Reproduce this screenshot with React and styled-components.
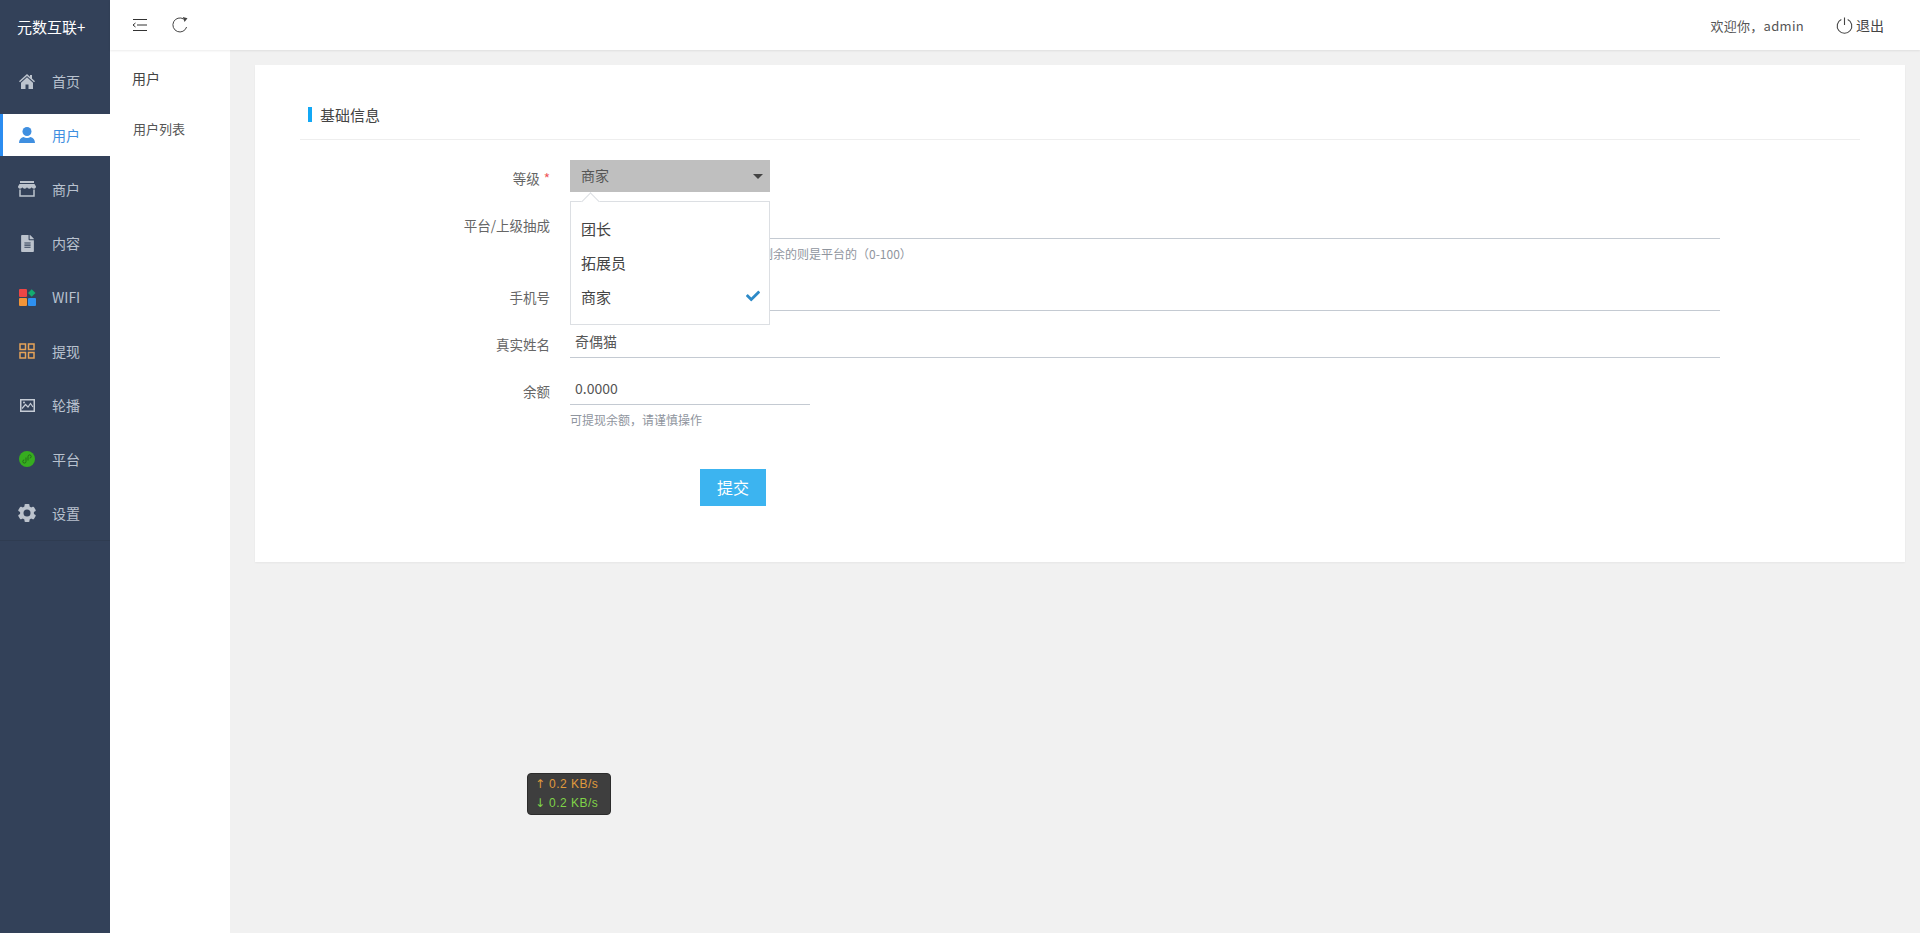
import React from 'react'
import styled, { createGlobalStyle } from 'styled-components'
import { FaFileAlt, FaCheck } from 'react-icons/fa'

const Global = createGlobalStyle`
  html, body { margin: 0; padding: 0; height: 100%; }
  body { font-family: "Noto Sans CJK SC", "Liberation Sans", sans-serif; background: #f1f1f1; overflow: hidden; }
  * { box-sizing: border-box; }
`

const Page = styled.div`
  display: flex;
  height: 933px;
  position: relative;
`
const Sidebar = styled.aside`
  width: 110px;
  flex: none;
  background: #334159;
`
const Logo = styled.div`
  height: 50px;
  padding: 3px 0 0 17px;
  display: flex;
  align-items: center;
  color: #fff;
  font-size: 15px;
`
const Nav = styled.nav`
  padding-top: 10px;
  padding-bottom: 6px;
  display: flex;
  flex-direction: column;
  gap: 12px;
  border-bottom: 1px solid #2f3c51;
`
const NavItem = styled.div`
  height: 42px;
  display: flex;
  align-items: center;
  padding-left: 18px;
  gap: 16px;
  font-size: 14px;
  color: ${p => (p.$active ? '#3f8fe0' : '#b9c2cf')};
  background: ${p => (p.$active ? '#fff' : 'transparent')};
  box-shadow: ${p => (p.$active ? 'inset 3px 0 0 #2b8cf0' : 'none')};
`
const NavIcon = styled.span`
  width: 18px;
  height: 18px;
  flex: none;
  display: flex;
  align-items: center;
  justify-content: center;
  color: #bcc3cd;
`
const Right = styled.div`
  flex: 1;
  min-width: 0;
  display: flex;
  flex-direction: column;
`
const TopBar = styled.header`
  height: 50px;
  flex: none;
  background: #fff;
  display: flex;
  align-items: center;
  justify-content: space-between;
  padding: 0 36px 0 22px;
  box-shadow: 0 1px 2px rgba(0, 0, 0, 0.08);
  position: relative;
  z-index: 1;
`
const ToolGroup = styled.div`
  display: flex;
  align-items: center;
  gap: 24px;
`
const UserGroup = styled.div`
  display: flex;
  align-items: center;
  font-size: 13px;
  letter-spacing: 0.3px;
  color: #555;
`
const Logout = styled.span`
  display: flex;
  align-items: center;
  gap: 3px;
  margin-left: 32px;
  font-size: 14px;
  letter-spacing: 0;
  color: #444;
`
const Body = styled.div`
  flex: 1;
  display: flex;
  min-height: 0;
`
const SubMenu = styled.div`
  width: 120px;
  flex: none;
  background: #fff;
  padding-top: 2px;
`
const SubTitle = styled.div`
  height: 51px;
  display: flex;
  align-items: center;
  padding-left: 22px;
  font-size: 14px;
  color: #444;
`
const SubLink = styled(SubTitle)`
  font-size: 13px;
  padding-left: 23px;
  color: #555;
`
const Main = styled.main`
  flex: 1;
  min-width: 0;
  padding: 15px 15px 0 25px;
`
const Card = styled.section`
  background: #fff;
  padding: 25px 45px 56px;
  box-shadow: 0 1px 2px rgba(0, 0, 0, 0.05);
`
const SectionTitle = styled.h2`
  margin: 0 0 20px;
  height: 50px;
  display: flex;
  align-items: center;
  padding-left: 8px;
  gap: 8px;
  font-size: 15px;
  font-weight: 400;
  color: #444;
  border-bottom: 1px solid #eee;
  &::before {
    content: '';
    width: 4px;
    height: 15px;
    background: #13a8f5;
  }
`
const Row = styled.div`
  display: flex;
  margin-bottom: ${p => p.$gap}px;
`
const Label = styled.label`
  width: 250px;
  flex: none;
  margin-right: 20px;
  padding-top: ${p => p.$drop}px;
  text-align: right;
  font-size: 13.5px;
  line-height: 26px;
  color: #666;
`
const Star = styled.span`
  color: #e55;
  margin-left: 4px;
`
const Field = styled.div`
  width: ${p => p.$width || 1150}px;
  position: relative;
`
const Input = styled.input`
  display: block;
  width: 100%;
  height: 39px;
  padding: 5px 5px 0;
  border: 0;
  border-bottom: 1px solid #c4cad2;
  outline: none;
  background: transparent;
  font: inherit;
  font-size: 14px;
  color: #555;
`
const Help = styled.div`
  height: 30px;
  padding-left: ${p => p.$indent || 0}px;
  font-size: 12px;
  line-height: 30px;
  color: #8f959e;
`
const SelectBox = styled.div`
  width: 200px;
  height: 32px;
  padding: 0 7px 2px 11px;
  background: #bfbfbf;
  display: flex;
  align-items: center;
  justify-content: space-between;
  font-size: 14px;
  color: #555;
  &::after {
    content: '';
    margin-top: 2px;
    border-left: 5px solid transparent;
    border-right: 5px solid transparent;
    border-top: 5px solid #444;
  }
`
const Menu = styled.ul`
  position: absolute;
  top: 41px;
  left: 0;
  width: 200px;
  margin: 0;
  padding: 10px 0;
  list-style: none;
  background: #fff;
  border: 1px solid #dcdfe3;
  z-index: 5;
  &::before {
    content: '';
    position: absolute;
    left: 13px;
    top: -7px;
    width: 12px;
    height: 12px;
    background: #fff;
    border-left: 1px solid #dcdfe3;
    border-top: 1px solid #dcdfe3;
    transform: rotate(45deg);
  }
`
const MenuItem = styled.li`
  height: 34px;
  display: flex;
  align-items: center;
  justify-content: space-between;
  padding: 0 9px 2px 10px;
  font-size: 15px;
  color: #444;
`
const Submit = styled.button`
  display: block;
  width: 66px;
  height: 37px;
  margin: 34px 0 0 400px;
  padding: 0 0 1px;
  border: 0;
  background: #3cb4f0;
  color: #fff;
  font: inherit;
  font-size: 16px;
`
const Speed = styled.div`
  position: absolute;
  left: 527px;
  top: 773px;
  width: 84px;
  height: 42px;
  padding: 1px 0 0 7px;
  background: #3e3e3e;
  border: 1px solid #2c2c2c;
  border-radius: 4px;
  font-family: "Liberation Sans", sans-serif;
  font-size: 12px;
  line-height: 19px;
  z-index: 10;
`
const SpeedLine = styled.div`
  display: flex;
  gap: 4px;
  color: ${p => p.$color};
`
const SpeedArrow = styled.span`
  font-family: "DejaVu Sans", sans-serif;
  font-size: 12px;
  width: 10px;
`
const SpeedValue = styled.span`
  letter-spacing: 0.5px;
`

const MenuFold = () => (
  <svg width="16" height="14" viewBox="0 0 16 14" fill="none" stroke="#333" strokeWidth="1">
    <path d="M1 1.500h14M5 7h10M1 12.500h14M3.500 5 1 7l2.500 2" />
  </svg>
)
const Refresh = () => (
  <svg width="16" height="16" viewBox="0 0 16 16" fill="none" stroke="#444" strokeWidth="1">
    <path d="M14.600 10A7 7 0 1 1 11.600 2" />
    <path d="M10.800 0 15.500 1.300 12.500 5Z" fill="#444" stroke="none" />
  </svg>
)
const Power = () => (
  <svg width="17" height="17" viewBox="0 0 17 17" fill="none" stroke="#444" strokeWidth="1.100">
    <path d="M5.300 2.400a7.300 7.300 0 1 0 6.400 0M8.500 0.500v7.500" />
  </svg>
)
const Home = () => (
  <svg width="16" height="15" viewBox="0 0 16 15" fill="#bcc3cd">
    <path d="M8 0 11 2.700V1h2v3.500L16 7.300 15 8.300 8 2 1 8.300 0 7.300Z" />
    <path d="M8 3.300 14 8.700V15H9.500V10.500h-3V15H2V8.700Z" />
  </svg>
)
const User = () => (
  <svg width="16" height="16" viewBox="0 0 16 16" fill="#3f8fe0">
    <circle cx="8" cy="4.500" r="4.500" />
    <path d="M0 16c0-3.500 1.800-5.500 4.500-6 1 .7 2.200 1 3.500 1s2.500-.3 3.500-1c2.700.5 4.500 2.500 4.500 6Z" />
  </svg>
)
const Store = () => (
  <svg width="18" height="16" viewBox="0 0 18 16">
    <path d="M2 0h14v2H2Z" fill="#bcc3cd" />
    <path d="M1.500 3h15L18 5.500c0 1.400-.8 2.200-2 2.200s-2-.6-2.300-1.400c-.4.800-1.300 1.400-2.400 1.400S9.400 7.100 9 6.300c-.4.800-1.200 1.400-2.300 1.400S4.700 7.100 4.300 6.300C4 7.100 3.200 7.700 2 7.700S0 6.900 0 5.500Z" fill="#bcc3cd" />
    <path d="M2 8.500V15h14V8.500" fill="none" stroke="#bcc3cd" strokeWidth="1.500" />
  </svg>
)
const Wifi = () => (
  <svg width="17" height="17" viewBox="0 0 17 17">
    <rect x="0" y="0" width="8" height="8" rx="1" fill="#ee4545" />
    <path d="M12.700.3 16.500 4 12.700 7.800 9 4Z" fill="#14ab6f" />
    <rect x="0" y="9" width="8" height="8" rx="1" fill="#f29438" />
    <rect x="9" y="9" width="8" height="8" rx="1" fill="#2e90f0" />
  </svg>
)
const Grid = () => (
  <svg width="16" height="16" viewBox="0 0 16 16" fill="none" stroke="#e6a358" strokeWidth="1.500">
    <rect x="1" y="1" width="5.500" height="5.500" />
    <rect x="9.500" y="1" width="5.500" height="5.500" />
    <rect x="1" y="9.500" width="5.500" height="5.500" />
    <rect x="9.500" y="9.500" width="5.500" height="5.500" />
  </svg>
)
const Picture = () => (
  <svg width="15" height="13" viewBox="0 0 15 13" fill="none" stroke="#c6ccd6">
    <rect x="0.750" y="0.750" width="13.500" height="11.500" strokeWidth="1.500" />
    <path d="M2 9.500 5.500 5.500 8 8 10.500 4.500 13 8" strokeWidth="1.200" />
    <circle cx="4" cy="3.500" r="1" fill="#c6ccd6" stroke="none" />
  </svg>
)
const Mini = () => (
  <svg width="16" height="16" viewBox="0 0 16 16">
    <circle cx="8" cy="8" r="8" fill="#36ad1f" />
    <path d="M7 6.500v4a1.600 1.600 0 1 1-1.700-1.600M9 9.500v-4a1.600 1.600 0 1 1 1.700 1.600" fill="none" stroke="#1f5f16" strokeWidth="0.800" />
  </svg>
)
const Gear = () => (
  <svg width="18" height="18" viewBox="0 0 18 18">
    <circle cx="9" cy="9" r="7" fill="#bcc3cd" />
    {[0, 60, 120, 180, 240, 300].map(a => (
      <rect key={a} x="6.500" y="0" width="5" height="4" rx="1" fill="#bcc3cd" transform={`rotate(${a} 9 9)`} />
    ))}
    <circle cx="9" cy="9" r="3.500" fill="#334159" />
  </svg>
)

const navItems = [
  { name: '首页', icon: <Home /> },
  { name: '用户', icon: <User />, active: true },
  { name: '商户', icon: <Store /> },
  { name: '内容', icon: <FaFileAlt size={17} /> },
  { name: 'WIFI', icon: <Wifi /> },
  { name: '提现', icon: <Grid /> },
  { name: '轮播', icon: <Picture /> },
  { name: '平台', icon: <Mini /> },
  { name: '设置', icon: <Gear /> },
]

export default function App() {
  return (
    <Page>
      <Global />
      <Sidebar>
        <Logo>元数互联+</Logo>
        <Nav>
          {navItems.map(item => (
            <NavItem key={item.name} $active={item.active}>
              <NavIcon>{item.icon}</NavIcon>
              {item.name}
            </NavItem>
          ))}
        </Nav>
      </Sidebar>
      <Right>
        <TopBar>
          <ToolGroup>
            <MenuFold />
            <Refresh />
          </ToolGroup>
          <UserGroup>
            欢迎你，admin
            <Logout>
              <Power />
              退出
            </Logout>
          </UserGroup>
        </TopBar>
        <Body>
          <SubMenu>
            <SubTitle>用户</SubTitle>
            <SubLink>用户列表</SubLink>
          </SubMenu>
          <Main>
            <Card>
              <SectionTitle>基础信息</SectionTitle>
              <Row $gap={8}>
                <Label $drop={5}>等级<Star>*</Star></Label>
                <Field $width={200}>
                  <SelectBox>商家</SelectBox>
                  <Menu>
                    <MenuItem>团长</MenuItem>
                    <MenuItem>拓展员</MenuItem>
                    <MenuItem>
                      商家
                      <FaCheck size={14} color="#2d8ac8" />
                    </MenuItem>
                  </Menu>
                </Field>
              </Row>
              <Row $gap={3}>
                <Label $drop={12}>平台/上级抽成</Label>
                <Field>
                  <Input readOnly />
                  <Help $indent={191}>剩余的则是平台的（0-100）</Help>
                </Field>
              </Row>
              <Row $gap={8}>
                <Label $drop={12}>手机号</Label>
                <Field><Input readOnly /></Field>
              </Row>
              <Row $gap={8}>
                <Label $drop={12}>真实姓名</Label>
                <Field><Input readOnly value="奇偶猫" /></Field>
              </Row>
              <Row $gap={0}>
                <Label $drop={12}>余额</Label>
                <Field $width={240}>
                  <Input readOnly value="0.0000" />
                  <Help>可提现余额，请谨慎操作</Help>
                </Field>
              </Row>
              <Submit>提交</Submit>
            </Card>
          </Main>
        </Body>
      </Right>
      <Speed>
        <SpeedLine $color="#e09a3c"><SpeedArrow>↑</SpeedArrow><SpeedValue>0.2 KB/s</SpeedValue></SpeedLine>
        <SpeedLine $color="#7ed348"><SpeedArrow>↓</SpeedArrow><SpeedValue>0.2 KB/s</SpeedValue></SpeedLine>
      </Speed>
    </Page>
  )
}
